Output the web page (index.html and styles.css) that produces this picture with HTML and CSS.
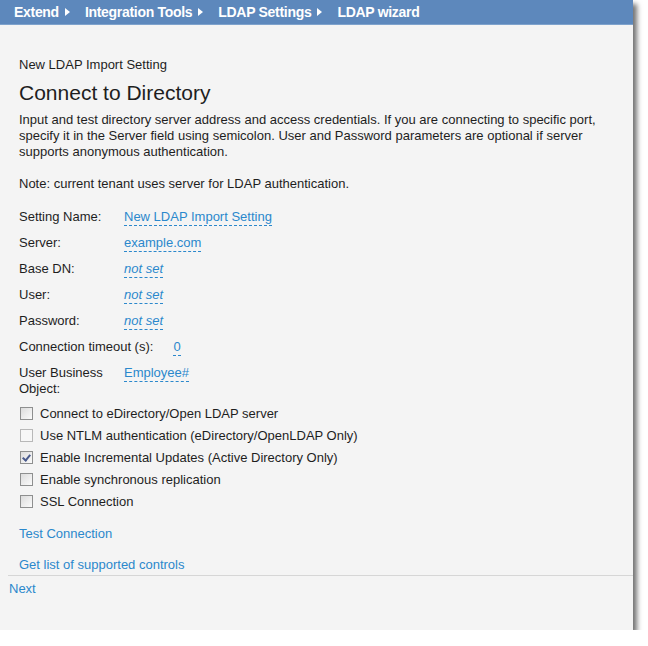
FILE: index.html
```html
<!DOCTYPE html>
<html lang="en">
<head>
  <meta charset="UTF-8">
  <title>LDAP wizard</title>
  <link rel="stylesheet" href="styles.css">
</head>
<body>
  <div class="window">
    <nav class="crumbs">
      <span>Extend</span><i class="arrow"></i>
      <span>Integration Tools</span><i class="arrow"></i>
      <span>LDAP Settings</span><i class="arrow"></i>
      <span>LDAP wizard</span>
    </nav>

    <section class="content">
      <div class="subtitle">New LDAP Import Setting</div>
      <h1>Connect to Directory</h1>
      <p class="intro">Input and test directory server address and access credentials. If you are connecting to specific port, specify it in the Server field using semicolon. User and Password parameters are optional if server supports anonymous authentication.</p>
      <p class="note">Note: current tenant uses server for LDAP authentication.</p>

      <div class="fields">
        <div class="row"><span class="label">Setting Name:</span><a class="value">New LDAP Import Setting</a></div>
        <div class="row"><span class="label">Server:</span><a class="value">example.com</a></div>
        <div class="row"><span class="label">Base DN:</span><a class="value empty">not set</a></div>
        <div class="row"><span class="label">User:</span><a class="value empty">not set</a></div>
        <div class="row"><span class="label">Password:</span><a class="value empty">not set</a></div>
        <div class="row"><span class="label">Connection timeout (s):</span><a class="value">0</a></div>
        <div class="row"><span class="label narrow">User Business Object:</span><a class="value">Employee#</a></div>
      </div>

      <ul class="options">
        <li><span class="box"></span>Connect to eDirectory/Open LDAP server</li>
        <li><span class="box disabled"></span>Use NTLM authentication (eDirectory/OpenLDAP Only)</li>
        <li><span class="box checked"></span>Enable Incremental Updates (Active Directory Only)</li>
        <li><span class="box"></span>Enable synchronous replication</li>
        <li><span class="box"></span>SSL Connection</li>
      </ul>

      <a class="action test">Test Connection</a>
      <a class="action">Get list of supported controls</a>
    </section>

    <footer class="footer">
      <a class="action">Next</a>
    </footer>
  </div>
</body>
</html>
```

FILE: styles.css
```css
* {
  margin: 0;
  padding: 0;
  box-sizing: border-box;
}

body {
  background: #ffffff;
  font-family: 'Liberation Sans', Arial, sans-serif;
  font-size: 13px;
  color: #1e1e1e;
}

.window {
  width: 633px;
  height: 630px;
  background: #f4f4f4;
  box-shadow: 4px 4px 5px rgba(0, 0, 0, 0.55);
}

/* Breadcrumb bar */
.crumbs {
  height: 25px;
  background: #5d88bc;
  border-bottom: 1px solid #7ea2cc;
  display: flex;
  align-items: center;
  padding-left: 14px;
  color: #ffffff;
  font-weight: bold;
  font-size: 14px;
  letter-spacing: -0.3px;
}

.arrow {
  width: 0;
  height: 0;
  border-top: 4px solid transparent;
  border-bottom: 4px solid transparent;
  border-left: 5px solid #ffffff;
  margin: 0 15px 0 6px;
}

.content {
  padding: 32px 0 0 19px;
}

.subtitle {
  line-height: 16px;
}

h1 {
  font-size: 21px;
  font-weight: normal;
  line-height: 24px;
  margin-top: 8px;
  margin-bottom: 7px;
}

.intro,
.note {
  line-height: 16px;
  padding-right: 2px;
}

.note {
  margin-top: 16px;
  margin-bottom: 17px;
}

/* Field list */
.fields {
  display: flex;
  flex-direction: column;
  gap: 9px;
}

.row {
  display: flex;
  line-height: 16px;
}

.label {
  min-width: 85px;
  margin-right: 20px;
  white-space: nowrap;
}

.label.narrow {
  width: 90px;
  min-width: 0;
  margin-right: 15px;
  white-space: normal;
}

.value {
  color: #2b88cc;
  border-bottom: 1px dashed #2b88cc;
  height: 17px;
}

.value.empty {
  font-style: italic;
}

/* Checkbox options */
.options {
  list-style: none;
  margin-top: 5px;
}

.options li {
  display: flex;
  align-items: center;
  height: 22px;
  padding-left: 1px;
}

.box {
  width: 13px;
  height: 13px;
  border: 1px solid #8e8f8f;
  background: linear-gradient(135deg, #dcdcdc, #fbfbfb);
  margin-right: 7px;
  position: relative;
}

.box.disabled {
  border-color: #b8b8b8;
  background: #f7f7f7;
}

.box.checked::after {
  content: '';
  position: absolute;
  left: 3px;
  top: 1px;
  width: 3px;
  height: 6px;
  border: solid #4a5a8c;
  border-width: 0 2px 2px 0;
  transform: rotate(40deg);
}

.action {
  display: block;
  color: #2b88cc;
  line-height: 16px;
}

.action.test {
  margin-top: 14px;
  margin-bottom: 15px;
}

.footer {
  margin: 2px 0 0 8px;
  border-top: 1px solid #d6d6d6;
  padding-top: 5px;
}

.footer .action {
  margin-left: 1px;
}
```
